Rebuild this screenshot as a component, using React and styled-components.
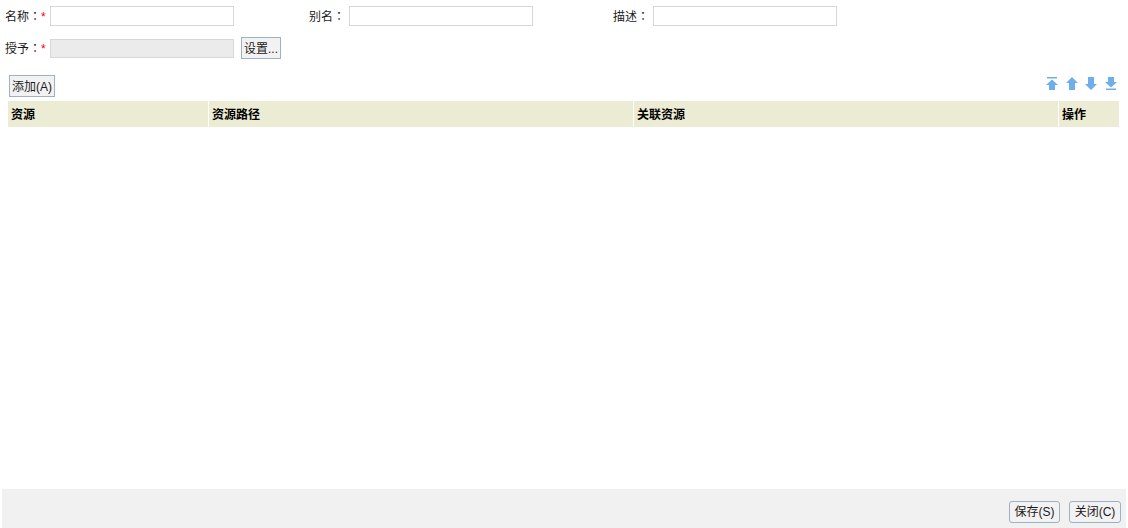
import React from "react";
import styled, { createGlobalStyle } from "styled-components";

const Global = createGlobalStyle`
  html, body { margin: 0; padding: 0; background: #fff; overflow: hidden; }
  body { font-family: "Liberation Sans", "Noto Sans CJK SC", sans-serif; font-size: 12px; color: #1a1a1a; }
`;
const Page = styled.div`
  width: 1128px; height: 528px; display: flex; flex-direction: column;
`;
const Form = styled.div`
  display: flex; flex-direction: column; padding: 6px 0 0 5px; height: 75px; box-sizing: border-box;
`;
const FormRow = styled.div`
  display: flex; align-items: center; height: ${p => p.$h}px; margin-bottom: ${p => p.$mb || 0}px;
`;
const Field = styled.div`
  display: flex; align-items: center; width: ${p => p.$w}px; flex: none;
`;
const Label = styled.label`
  width: ${p => p.$w}px; flex: none; white-space: nowrap; line-height: 22px; padding-top: 1px;
`;
const Colon = styled.span` font-family: "Noto Sans CJK TC", sans-serif; `;
const Star = styled.span` color: #f00; `;
const TextInput = styled.input`
  width: 184px; height: ${p => p.$h}px; box-sizing: border-box; flex: none; margin: 0; padding: 0 3px;
  border: 1px solid #d9d8d2; background: ${p => p.disabled ? "#ebebeb" : "#fff"}; outline: none;
`;
const Btn = styled.button`
  height: 22px; width: ${p => p.$w}px; box-sizing: border-box; padding: ${p => p.$pt ?? 1}px 0 0; margin: 0 0 0 ${p => p.$ml || 0}px;
  font: inherit; color: #1a1a1a; background: #f2f2f2; border: 1px solid #9fb0c0; border-radius: ${p => p.$r || 0}px;
  text-align: center; line-height: 20px; white-space: nowrap; flex: none;
`;
const Toolbar = styled.div`
  display: flex; justify-content: space-between; align-items: flex-start; height: 26px; padding: 0 11px 0 9px;
`;
const Arrows = styled.div`
  display: flex; gap: 7.67px; padding-top: 2px;
`;
const Grid = styled.div`
  flex: 1; padding: 0 9px 0 8px;
`;
const HeaderRow = styled.div`
  display: grid; grid-template-columns: 200px 424px 424px 60px; grid-template-rows: 26px; column-gap: 1px;
`;
const HeaderCell = styled.div`
  background: #ecebd3; font-weight: bold; color: #000; padding: 2px 0 0 3px; line-height: 24px;
`;
const Footer = styled.div`
  height: 39px; margin: 0 2px; background: #f1f1f1; display: flex; justify-content: flex-end; align-items: flex-start;
  padding: 12px 5px 0 0; box-sizing: border-box;
`;

const ArrowIcon = ({ flip, bar }) => (
  <svg width="12" height="13" viewBox="0 0 12 13" style={{ display: "block" }} fill="#6eaeea">
    <g transform={flip ? "rotate(180 6 6.5)" : undefined}>
      {bar && <rect x="1" y="0" width="10" height="1.5" />}
      <path d={bar ? "M6 2.5 L12 8 H9 V13 H3 V8 H0 Z" : "M6 0 L12 6 H9 V13 H3 V6 H0 Z"} />
    </g>
  </svg>
);

export default function App() {
  return (
    <Page>
      <Global />
      <Form>
        <FormRow $h={20} $mb={11}>
          <Field $w={304}>
            <Label $w={45}>名称<Colon>：</Colon><Star>*</Star></Label>
            <TextInput $h={20} />
          </Field>
          <Field $w={304}>
            <Label $w={40}>别名<Colon>：</Colon></Label>
            <TextInput $h={20} />
          </Field>
          <Field $w={300}>
            <Label $w={40}>描述<Colon>：</Colon></Label>
            <TextInput $h={20} />
          </Field>
        </FormRow>
        <FormRow $h={22}>
          <Label $w={45}>授予<Colon>：</Colon><Star>*</Star></Label>
          <TextInput $h={19} disabled />
          <Btn $w={40} $ml={7}>设置...</Btn>
        </FormRow>
      </Form>
      <Toolbar>
        <Btn $w={46}>添加(A)</Btn>
        <Arrows>
          <ArrowIcon bar />
          <ArrowIcon />
          <ArrowIcon flip />
          <ArrowIcon flip bar />
        </Arrows>
      </Toolbar>
      <Grid>
        <HeaderRow>
          <HeaderCell>资源</HeaderCell>
          <HeaderCell>资源路径</HeaderCell>
          <HeaderCell>关联资源</HeaderCell>
          <HeaderCell>操作</HeaderCell>
        </HeaderRow>
      </Grid>
      <Footer>
        <Btn $w={51} $r={3} $pt={0}>保存(S)</Btn>
        <Btn $w={52} $ml={9} $r={3} $pt={0}>关闭(C)</Btn>
      </Footer>
    </Page>
  );
}
